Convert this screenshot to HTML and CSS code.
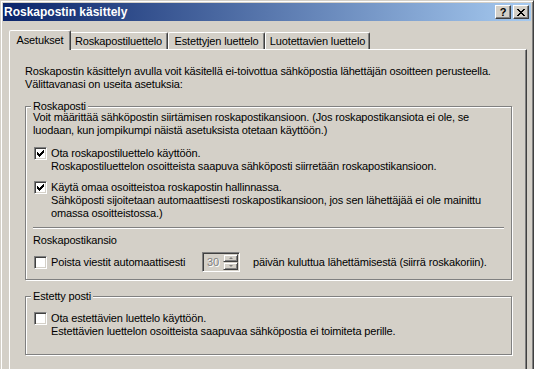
FILE: index.html
```html
<!DOCTYPE html>
<html lang="fi">
<head>
<meta charset="UTF-8">
<title>Roskapostin käsittely</title>
<link rel="stylesheet" href="styles.css">
</head>
<body>

<div class="window">
	<div class="titlebar">
		<span class="title">Roskapostin käsittely</span>
		<div class="tbtns">
			<span class="tbtn">?</span>
			<span class="tbtn">
				<svg width="8" height="7" viewBox="0 0 8 7" shape-rendering="crispEdges"><path d="M0 0h2v1h-2zM6 0h2v1h-2zM1 1h2v1h-2zM5 1h2v1h-2zM2 2h4v1h-4zM3 3h2v1h-2zM2 4h4v1h-4zM1 5h2v1h-2zM5 5h2v1h-2zM0 6h2v1h-2zM6 6h2v1h-2z" fill="#000"/></svg>
			</span>
		</div>
	</div>

	<div class="main">
		<ul class="tabs">
			<li class="tab t1 on">Asetukset</li>
			<li class="tab t2">Roskapostiluettelo</li>
			<li class="tab t3">Estettyjen luettelo</li>
			<li class="tab t4">Luotettavien luettelo</li>
		</ul>

		<div class="pane">
			<p>Roskapostin käsittelyn avulla voit käsitellä ei-toivottua sähköpostia lähettäjän osoitteen perusteella.<br>Välittavanasi on useita asetuksia:</p>

			<fieldset class="group g1">
				<legend>Roskaposti</legend>
				<p>Voit määrittää sähköpostin siirtämisen roskapostikansioon. (Jos roskapostikansiota ei ole, se<br>luodaan, kun jompikumpi näistä asetuksista otetaan käyttöön.)</p>

				<div class="check c1">
					<span class="box"><svg width="7" height="7" viewBox="0 0 7 7" shape-rendering="crispEdges"><path d="M0 2h1v3h-1zM1 3h1v3h-1zM2 4h1v3h-1zM3 3h1v3h-1zM4 2h1v3h-1zM5 1h1v3h-1zM6 0h1v3h-1z" fill="#000"/></svg></span>
					<span>Ota roskapostiluettelo käyttöön.<br>Roskapostiluettelon osoitteista saapuva sähköposti siirretään roskapostikansioon.</span>
				</div>

				<div class="check c2">
					<span class="box"><svg width="7" height="7" viewBox="0 0 7 7" shape-rendering="crispEdges"><path d="M0 2h1v3h-1zM1 3h1v3h-1zM2 4h1v3h-1zM3 3h1v3h-1zM4 2h1v3h-1zM5 1h1v3h-1zM6 0h1v3h-1z" fill="#000"/></svg></span>
					<span>Käytä omaa osoitteistoa roskapostin hallinnassa.<br>Sähköposti sijoitetaan automaattisesti roskapostikansioon, jos sen lähettäjää ei ole mainittu<br>omassa osoitteistossa.)</span>
				</div>

				<div class="sep"></div>
				<div class="subhead">Roskapostikansio</div>

				<div class="row">
					<span class="box"></span>
					<span class="lbl">Poista viestit automaattisesti</span>
					<span class="spin">
						<span class="val">30</span>
						<span class="arrows">
							<span class="sbtn"><i class="up"></i></span>
							<span class="sbtn"><i class="down"></i></span>
						</span>
					</span>
					<span class="after">päivän kuluttua lähettämisestä (siirrä roskakoriin).</span>
				</div>
			</fieldset>

			<fieldset class="group g2">
				<legend>Estetty posti</legend>
				<div class="check c3">
					<span class="box"></span>
					<span>Ota estettävien luettelo käyttöön.<br>Estettävien luettelon osoitteista saapuvaa sähköpostia ei toimiteta perille.</span>
				</div>
			</fieldset>
		</div>
	</div>
</div>

</body>
</html>
```

FILE: styles.css
```css
* {
	margin: 0;
	padding: 0;
	box-sizing: border-box;
}
html, body {
	background: #fff;
	overflow: hidden;
}
body {
	font: 11px/13px "Liberation Sans", Arial, sans-serif;
	letter-spacing: -0.15px;
	color: #000;
}
li {
	list-style: none;
}

/* ikkuna */
.window {
	width: 534px;
	height: 369px;
	overflow: hidden;
	padding: 2px;
	background: #d4d0c8;
	border: 1px solid;
	border-bottom: none;
	border-color: #d4d0c8 #404040 #404040 #d4d0c8;
	box-shadow: inset 1px 1px 0 #fff, inset -1px 0 0 #808080;
}
.titlebar {
	height: 18px;
	display: flex;
	align-items: center;
	justify-content: space-between;
	padding: 0 2px 0 1px;
	background: linear-gradient(to right, #0a246a, #a6caf0);
	color: #fff;
}
.title {
	font: bold 12px/18px "Liberation Sans", Arial, sans-serif;
	letter-spacing: 0;
}
.tbtns {
	display: flex;
	gap: 2px;
}
.tbtn {
	width: 16px;
	height: 14px;
	display: flex;
	align-items: center;
	justify-content: center;
	background: #d4d0c8;
	border: 1px solid;
	border-color: #fff #404040 #404040 #fff;
	box-shadow: inset -1px -1px 0 #808080;
	color: #000;
	font: bold 11px/12px "Liberation Sans", Arial, sans-serif;
}

/* välilehdet */
.main {
	padding: 9px 4px 0 6px;
}
.tabs {
	display: flex;
	align-items: flex-end;
	height: 19px;
	padding-left: 2px;
}
.tab {
	height: 17px;
	text-align: center;
	line-height: 16px;
	border: 1px solid;
	border-bottom: none;
	border-color: #fff #404040 transparent #fff;
	border-radius: 2px 2px 0 0;
	box-shadow: inset -1px 0 0 #808080;
}
.tab.on {
	height: 20px;
	margin: 0 -2px -1px;
	line-height: 19px;
	position: relative;
	z-index: 1;
	background: #d4d0c8;
}
.t1 { width: 62px; }
.t2 { width: 99px; }
.t3 { width: 97px; }
.t4 { width: 105px; }

.pane {
	height: 340px;
	padding: 15px 14px 0 15px;
	border: 1px solid;
	border-color: #fff #404040 #404040 #fff;
	box-shadow: inset -1px -1px 0 #808080;
}

/* ryhmät */
.group {
	border: 1px solid #808080;
	box-shadow: inset 1px 1px 0 #fff, 1px 1px 0 #fff;
	padding: 0 7px 7px;
}
.group legend {
	padding: 0 2px;
	margin-left: -2px;
	line-height: 9px;
	background: #d4d0c8;
}
.g1 {
	margin-top: 11px;
}
.g2 {
	margin-top: 12px;
	padding-bottom: 16px;
}

.check, .row {
	display: flex;
	gap: 4px;
	padding-left: 1px;
}
.c1 { margin-top: 10px; }
.c2 { margin-top: 8px; }
.c3 { margin-top: 11px; }
.row {
	align-items: center;
	margin-top: 5px;
	height: 20px;
}

.box {
	flex: none;
	width: 13px;
	height: 13px;
	background: #fff;
	border: 1px solid;
	border-color: #808080 #fff #fff #808080;
	box-shadow: inset 1px 1px 0 #404040, inset -1px -1px 0 #d4d0c8;
}
.box svg {
	display: block;
	margin: 2px;
}

.sep {
	margin-top: 7px;
	height: 2px;
	border-top: 1px solid #808080;
	border-bottom: 1px solid #fff;
}
.subhead {
	margin-top: 5px;
}

.lbl {
	width: 147px;
}
.spin {
	display: flex;
	width: 38px;
	height: 20px;
	padding: 1px;
	border: 1px solid;
	border-color: #808080 #fff #fff #808080;
	box-shadow: inset 1px 1px 0 #404040, inset -1px -1px 0 #d4d0c8;
}
.val {
	flex: 1;
	padding-left: 3px;
	line-height: 16px;
	color: #808080;
	text-shadow: 1px 1px 0 #fff;
}
.arrows {
	display: flex;
	flex-direction: column;
	width: 15px;
}
.sbtn {
	height: 8px;
	display: flex;
	align-items: center;
	justify-content: center;
	background: #d4d0c8;
	border: 1px solid;
	border-color: #d4d0c8 #404040 #404040 #d4d0c8;
	box-shadow: inset 1px 1px 0 #fff, inset -1px -1px 0 #808080;
}
.sbtn i {
	width: 0;
	height: 0;
	border-left: 2px solid transparent;
	border-right: 2px solid transparent;
}
.sbtn .up {
	border-bottom: 2px solid #808080;
}
.sbtn .down {
	border-top: 2px solid #808080;
}
.after {
	margin-left: 9px;
}
```
